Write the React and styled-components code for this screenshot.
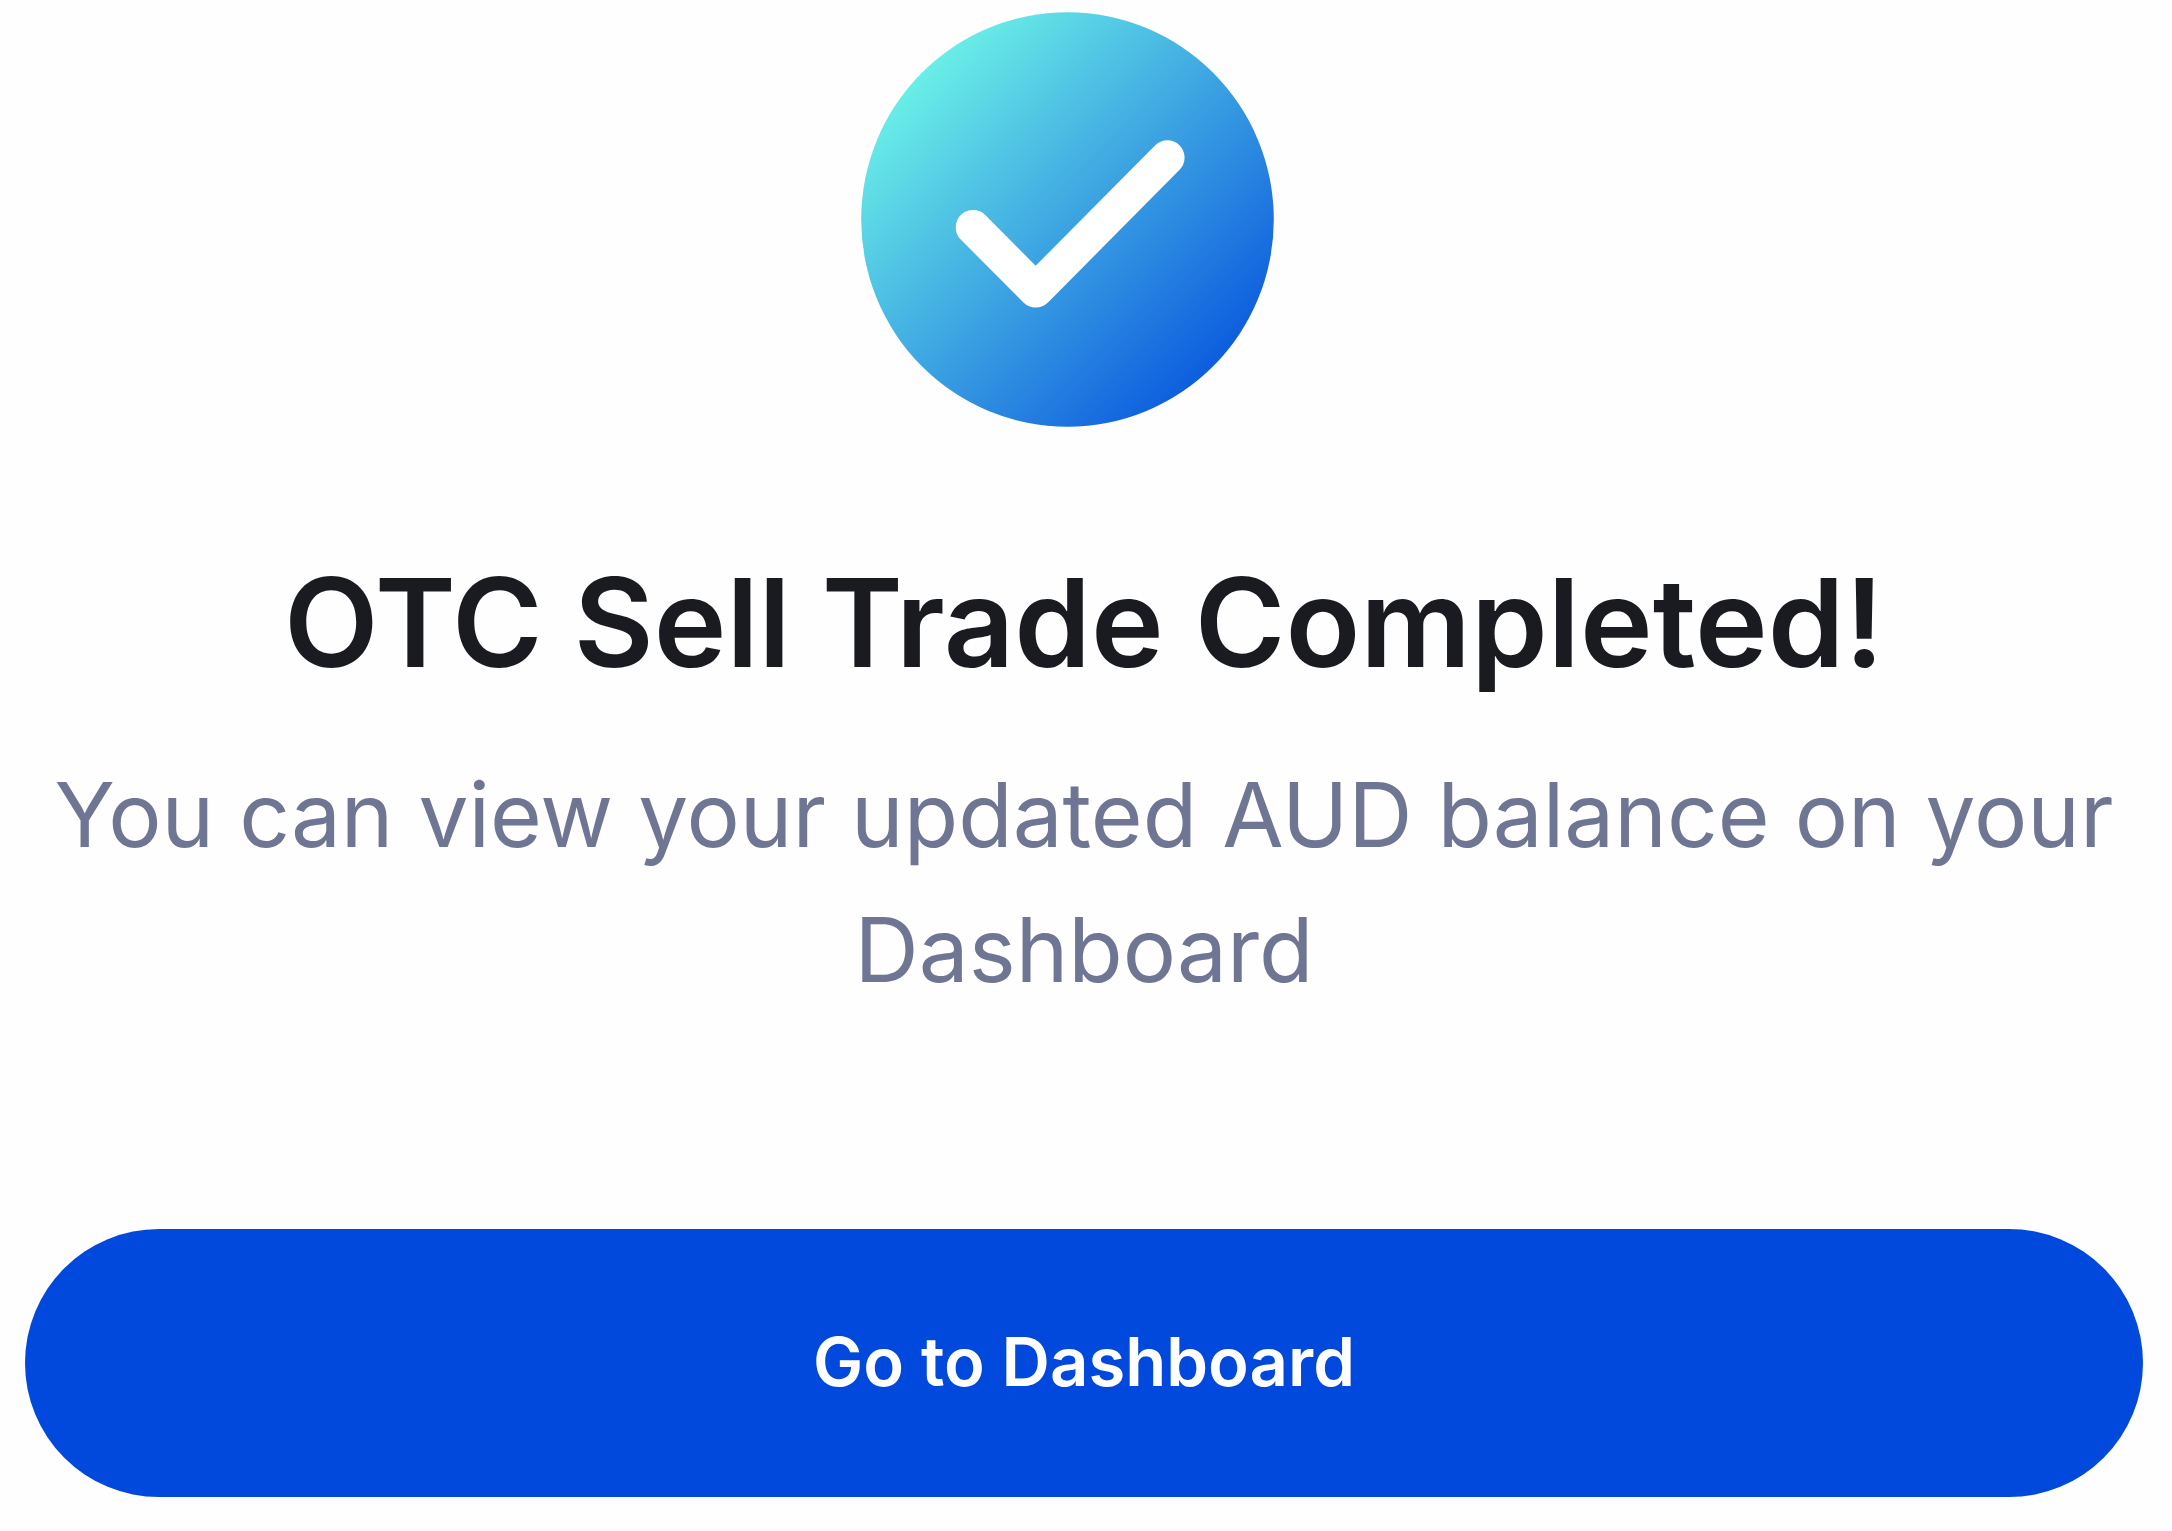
import React from 'react';
import styled, { createGlobalStyle } from 'styled-components';

const GlobalStyle = createGlobalStyle`
    * {
        box-sizing: border-box;
    }

    body {
        margin: 0;
        background-color: #fefefe;
        font-family: Inter, "Liberation Sans", sans-serif;
    }
`;

const Container = styled.main`
    width: 100%;
    display: flex;
    flex-direction: column;
    align-items: center;
    padding: 12px 29px 34px 25px;
    text-align: center;
`;

const SuccessIcon = styled.svg`
    width: 413px;
    height: 415px;
    margin-right: 33px;
`;

const Title = styled.h1`
    margin: 112px 0 0;
    color: #1a1b20;
    font-size: 123px;
    font-weight: 600;
    line-height: 168px;
`;

const Description = styled.p`
    margin: 40px 0 0;
    color: #6e7693;
    font-size: 89px;
    font-weight: 400;
    line-height: 135px;
`;

const Button = styled.button`
    width: 100%;
    margin-top: 212px;
    padding: 93px 32px 95px;
    border: 0;
    border-radius: 134px;
    background-color: #0049dc;
    color: #ffffff;
    font-family: inherit;
    font-size: 67px;
    font-weight: 600;
    line-height: 80px;
    cursor: pointer;
`;

const Check = () => (
    <SuccessIcon viewBox="0 0 413 415" aria-hidden="true">
        <defs>
            <linearGradient id="success" x1="58" y1="60" x2="358" y2="358" gradientUnits="userSpaceOnUse">
                <stop offset="0" stopColor="#6aefe7" />
                <stop offset="0.5" stopColor="#3da4e2" />
                <stop offset="1" stopColor="#0c5bde" />
            </linearGradient>
        </defs>
        <ellipse cx="206.5" cy="207.5" rx="206.3" ry="207.3" fill="url(#success)" />
        <path
            d="M112 215.3 L174.7 278.3 L306.3 145.6"
            fill="none"
            stroke="#ffffff"
            strokeWidth="34.6"
            strokeLinecap="round"
            strokeLinejoin="round"
        />
    </SuccessIcon>
);

export default () => (
    <>
        <GlobalStyle />
        <Container>
            <Check />
            <Title>OTC Sell Trade Completed!</Title>
            <Description>You can view your updated AUD balance on your Dashboard</Description>
            <Button type="button">Go to Dashboard</Button>
        </Container>
    </>
);
